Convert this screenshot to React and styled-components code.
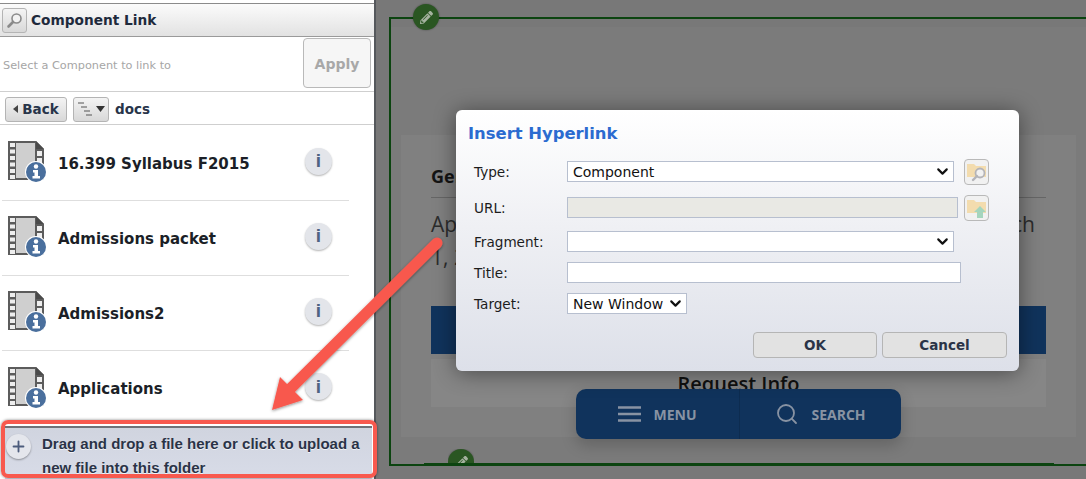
import React from "react";
import styled, { createGlobalStyle } from "styled-components";
import { FaPencilAlt } from "react-icons/fa";
import { Plus, Search, ChevronDown } from "lucide-react";

const verdana = `"DejaVu Sans", Verdana, sans-serif`;
const arial = `"Liberation Sans", Arial, sans-serif`;
const openSans = `"Open Sans", "Noto Sans", sans-serif`;

const files = ["16.399 Syllabus F2015", "Admissions packet", "Admissions2", "Applications"];

// -------------------- PAGE --------------------
const Global = createGlobalStyle`
  html, body { margin: 0; padding: 0; height: 100%; }
  body { overflow: hidden; background: #787878; }
  * { box-sizing: border-box; }
`;

const Page = styled.div`
  position: relative;
  display: flex;
  width: 1086px;
  height: 479px;
  overflow: hidden;
  background: #787878;
`;

// -------------------- SIDEBAR --------------------
const Sidebar = styled.aside`
  display: flex;
  flex-direction: column;
  flex: 0 0 376px;
  height: 479px;
  padding-top: 3px;
  background: #fff;
  border-right: 2px solid #55585c;
  overflow: hidden;
  font-family: ${verdana};
`;

const Header = styled.header`
  display: flex;
  align-items: center;
  gap: 4px;
  flex: 0 0 34px;
  padding-left: 2px;
  background: linear-gradient(#fbfbfb, #e2e2e2);
  border-top: 1px solid #8b8b8b;
  border-bottom: 1px solid #9a9a9a;
`;

const HeaderTitle = styled.h1`
  margin: 0;
  font-size: 13.7px;
  font-weight: 700;
  color: #1e2a3c;
`;

const IconButton = styled.button`
  display: flex;
  align-items: center;
  justify-content: center;
  width: ${(p) => p.$width || 25}px;
  height: 25px;
  padding: 0;
  gap: 3px;
  border: 1px solid #b4b4b4;
  border-radius: 3px;
  background: linear-gradient(#f4f4f4, #d8d8d8);
  font-family: ${verdana};
  font-size: 13.5px;
  font-weight: 700;
  color: #28354a;
`;

const ApplyRow = styled.div`
  display: flex;
  align-items: center;
  justify-content: space-between;
  flex: 0 0 55px;
  padding: 0 3px 3px 3px;
  border-bottom: 1px solid #cfcfcf;
`;

const Hint = styled.span`
  margin-top: 5px;
  font-size: 11.3px;
  color: #a6a6a6;
`;

const ApplyButton = styled.button`
  width: 68px;
  height: 50px;
  padding: 2px 0 0;
  border: 1px solid #b9b9b9;
  border-radius: 4px;
  background: #f6f6f6;
  font-family: ${verdana};
  font-size: 14px;
  font-weight: 700;
  color: #a8a8a8;
`;

const NavRow = styled.div`
  display: flex;
  align-items: center;
  gap: 6px;
  flex: 0 0 33px;
  padding: 2px 0 0 5px;
  border-bottom: 1px solid #cfcfcf;
`;

const FolderName = styled.span`
  font-size: 13.5px;
  font-weight: 700;
  color: #28354a;
`;

const FileList = styled.ul`
  flex: 0 0 300px;
  margin: 0;
  padding: 1px 0 0;
  list-style: none;
`;

const FileRow = styled.li`
  display: flex;
  align-items: center;
  width: 347px;
  height: 75px;
  margin-left: 2px;
  padding: 0 0 1px 6px;
  border-bottom: 1px solid #dedede;
  &:last-child { border-bottom: none; }
`;

const FileName = styled.span`
  flex: 1;
  margin-left: 12px;
  padding-top: 2px;
  font-size: 15px;
  font-weight: 700;
  color: #1b1f27;
`;

const FilmSvg = styled.svg`
  flex: 0 0 38px;
  margin-bottom: 2px;
`;

const InfoButton = styled.span`
  display: flex;
  align-items: center;
  justify-content: center;
  width: 27px;
  height: 27px;
  margin: 0 17px 3px 0;
  border-radius: 50%;
  background: #e3e5ea;
  box-shadow: 0 1px 2px rgba(0, 0, 0, 0.3);
  font-family: ${arial};
  font-size: 19px;
  font-weight: 700;
  color: #4f6282;
`;

const UploadBar = styled.div`
  position: relative;
  flex: 0 0 54px;
  margin: 0 2px 0 5px;
  padding: 4px 8px 0 37px;
  background: linear-gradient(#d0d4df, #d8dce8);
  border-top: 2px solid #6f7278;
  font-family: ${arial};
  font-size: 15px;
  font-weight: 700;
  line-height: 24px;
  color: #2a3347;
  text-shadow: 0 1px 0 rgba(255, 255, 255, 0.7);
`;

const PlusCircle = styled.span`
  position: absolute;
  left: 1px;
  top: 6px;
  display: flex;
  align-items: center;
  justify-content: center;
  width: 25px;
  height: 25px;
  border-radius: 50%;
  background: #e4e6ec;
  box-shadow: 0 1px 2px rgba(0, 0, 0, 0.35);
  color: #4c5c7c;
`;

// -------------------- BACKGROUND PAGE --------------------
const Stage = styled.main`
  flex: 1;
  padding: 17px 0 0 13px;
  font-family: ${openSans};
`;

const Frame = styled.section`
  position: relative;
  height: 449px;
  border: 2px solid #0c4410;
  border-right: none;
`;

const FrameBody = styled.div`
  height: calc(100% - 8px);
  margin-top: 8px;
  padding: 108px 10px 0 10px;
  background: #7b7b7b;
`;

const Panel = styled.div`
  height: 302px;
  padding: 29px 30px 0 30px;
  background: #808080;
`;

const Heading = styled.h2`
  margin: 0;
  height: 34px;
  border-bottom: 1px solid #666;
  font-size: 18px;
  font-weight: 700;
  color: #141414;
`;

const Paragraph = styled.div`
  display: flex;
  justify-content: space-between;
  padding-right: 11px;
  margin-top: ${(p) => p.$top || 0}px;
  font-size: 21px;
  line-height: 33px;
  color: #2c2c2c;
`;

const Band = styled.div`
  display: flex;
  align-items: center;
  justify-content: center;
  height: 48px;
  margin-top: ${(p) => p.$top}px;
  background: ${(p) => p.$color};
`;

const RequestInfo = styled.span`
  font-size: 20px;
  font-weight: 600;
  color: #111;
`;

const BottomRule = styled.div`
  height: 2px;
  margin: 26px 22px 0 23px;
  background: #0c4410;
`;

const Badge = styled.span`
  position: absolute;
  left: ${(p) => p.$left}px;
  top: ${(p) => p.$top}px;
  display: flex;
  align-items: center;
  justify-content: center;
  width: 26px;
  height: 26px;
  border-radius: 50%;
  background: #2a5622;
  box-shadow: 0 0 2px rgba(0, 0, 0, 0.4);
  color: #a6b3a0;
  font-size: 13px;
`;

const BottomClip = styled.span`
  position: absolute;
  left: 57px;
  top: 430px;
  width: 26px;
  height: 14px;
  overflow: hidden;
`;

const FloatingNav = styled.nav`
  position: absolute;
  left: 576px;
  top: 389px;
  display: flex;
  width: 325px;
  height: 50px;
  border-radius: 10px;
  background: #10335c;
  box-shadow: 0 6px 16px rgba(0, 0, 0, 0.2);
  color: #8893a3;
  font-family: ${openSans};
  font-size: 14px;
  font-weight: 700;
`;

const NavItem = styled.div`
  display: flex;
  align-items: center;
  justify-content: center;
  gap: ${(p) => p.$gap}px;
  flex: 0 0 ${(p) => p.$width}px;
  border-right: ${(p) => (p.$divided ? "1px solid #0d2c50" : "none")};
`;

// -------------------- DIALOG --------------------
const Dialog = styled.div`
  position: absolute;
  left: 456px;
  top: 110px;
  width: 563px;
  height: 261px;
  padding: 0 12px;
  border-radius: 6px;
  background: linear-gradient(#fff, #eff0f4 45%, #dde0e9);
  box-shadow: 0 2px 22px rgba(0, 0, 0, 0.45);
  font-family: ${verdana};
`;

const DialogTitle = styled.h3`
  display: flex;
  align-items: center;
  height: 51px;
  margin: 0;
  padding-bottom: 5px;
  font-size: 16.4px;
  font-weight: 700;
  color: #2b6bd0;
`;

const FormRow = styled.div`
  display: flex;
  align-items: flex-start;
  height: ${(p) => p.$height}px;
  padding-left: 6px;
`;

const FieldLabel = styled.label`
  flex: 0 0 93px;
  height: 21px;
  font-size: 13.6px;
  line-height: 23px;
  color: #1c1c1c;
`;

const SelectBox = styled.div`
  position: relative;
  display: flex;
  width: ${(p) => p.$width}px;
  height: 21px;
`;

const Select = styled.select`
  appearance: none;
  width: 100%;
  height: 21px;
  padding: 0 0 0 5px;
  border: 1px solid #b7bfcf;
  border-radius: 0;
  background: #fff;
  font-family: ${verdana};
  font-size: 14px;
  color: #111;
`;

const Chevron = styled.span`
  position: absolute;
  right: 3px;
  top: 2px;
  display: flex;
  pointer-events: none;
  color: #111;
`;

const TextInput = styled.input`
  width: ${(p) => p.$width}px;
  height: 21px;
  padding: 0 5px;
  border: 1px solid #b7bfcf;
  background: ${(p) => (p.disabled ? "#e9e9e4" : "#fff")};
`;

const FolderButton = styled.button`
  flex: 0 0 25px;
  height: 26px;
  margin: -2px 0 0 ${(p) => p.$gap}px;
  padding: 0;
  display: flex;
  align-items: center;
  justify-content: center;
  border: 1px solid #b9b9b9;
  border-radius: 4px;
  background: #f1f1f1;
`;

const Actions = styled.div`
  display: flex;
  justify-content: flex-end;
  gap: 5px;
  margin-top: 0;
`;

const DialogButton = styled.button`
  width: ${(p) => p.$width}px;
  height: 26px;
  padding: 0;
  border: 1px solid #b5b5b5;
  border-radius: 4px;
  background: #e2e2e2;
  font-family: ${verdana};
  font-size: 13.5px;
  font-weight: 700;
  color: #2a3347;
`;

// -------------------- ANNOTATION --------------------
const RedBox = styled.div`
  position: absolute;
  left: 1px;
  top: 420px;
  width: 376px;
  height: 58px;
  border: 4px solid #f8594e;
  border-radius: 7px;
  box-shadow: 0 0 3px rgba(0, 0, 0, 0.5);
  pointer-events: none;
`;

const ArrowLayer = styled.svg`
  position: absolute;
  left: 0;
  top: 0;
  pointer-events: none;
`;

// -------------------- ICONS --------------------
function FilmIcon() {
  const holes = [2, 8.5, 15, 21.5, 28, 34];
  return (
    <FilmSvg width="38" height="41" viewBox="0 0 38 41">
      <path d="M0 0H28L36 8V39H0Z" fill="#5c5c5c" />
      <rect x="8" y="2" width="19" height="35" fill="#cfcfcf" />
      <path d="M28 0L36 8H28Z" fill="#4a4a4a" />
      {holes.map((y) => (
        <rect key={y} x="2" y={y} width="5" height="4" fill="#eee" />
      ))}
      {[10, 17].map((y) => (
        <rect key={y} x="29" y={y} width="5" height="5" fill="#eee" />
      ))}
      <circle cx="28" cy="31" r="11" fill="#fff" />
      <circle cx="28" cy="31" r="10" fill="#4a6f9d" />
      <circle cx="28" cy="25.5" r="2.2" fill="#fff" />
      <path d="M25 29H30V35H32V37.5H24.5V35H26.5V31.5H25Z" fill="#fff" />
    </FilmSvg>
  );
}

function LensIcon() {
  return (
    <svg width="17" height="17" viewBox="0 0 17 17">
      <circle cx="10.5" cy="6.5" r="4.5" fill="#f2f2f2" stroke="#8a8a8a" strokeWidth="1.6" />
      <path d="M7 10L2.5 14.5" stroke="#8a8a8a" strokeWidth="2.6" strokeLinecap="round" />
    </svg>
  );
}

function TreeIcon() {
  return (
    <svg width="30" height="16" viewBox="0 0 30 16">
      <path d="M2 2H8M5 6H11M8 10H14M10 14H16" stroke="#555" strokeWidth="1" />
      <path d="M20 5H29L24.500 11Z" fill="#333" />
    </svg>
  );
}

function FolderGlyph({ children }) {
  return (
    <svg width="23" height="23" viewBox="0 0 23 23">
      <path d="M2 3H9L11 5H21V16H2Z" fill="#f3dcae" />
      {children}
    </svg>
  );
}

function MenuIcon() {
  return (
    <svg width="23" height="16" viewBox="0 0 23 16">
      <path d="M0 1.500H23M0 8H23M0 14.500H23" stroke="#8893a3" strokeWidth="2.4" />
    </svg>
  );
}

function Arrow() {
  return (
    <ArrowLayer width="1086" height="479" viewBox="0 0 1086 479">
      <defs>
        <filter id="arrowShadow" x="-10%" y="-10%" width="120%" height="120%">
          <feDropShadow dx="0" dy="1" stdDeviation="1.5" floodColor="#000" floodOpacity="0.45" />
        </filter>
      </defs>
      <g filter="url(#arrowShadow)" fill="#f8594e" stroke="none">
        <path d="M437 243L288 391" stroke="#f8594e" strokeWidth="11" strokeLinecap="round" />
        <path d="M272 410L280 377L292 389L303 400Z" />
      </g>
    </ArrowLayer>
  );
}

// -------------------- COMPONENT --------------------
export default function App() {
  return (
    <Page>
      <Global />
      <Sidebar>
        <Header>
          <IconButton><LensIcon /></IconButton>
          <HeaderTitle>Component Link</HeaderTitle>
        </Header>
        <ApplyRow>
          <Hint>Select a Component to link to</Hint>
          <ApplyButton>Apply</ApplyButton>
        </ApplyRow>
        <NavRow>
          <IconButton $width={62}>
            <svg width="6" height="8" viewBox="0 0 6 8"><path d="M5 0V8L0 4Z" fill="#444" /></svg>
            Back
          </IconButton>
          <IconButton $width={36}><TreeIcon /></IconButton>
          <FolderName>docs</FolderName>
        </NavRow>
        <FileList>
          {files.map((name) => (
            <FileRow key={name}>
              <FilmIcon />
              <FileName>{name}</FileName>
              <InfoButton>i</InfoButton>
            </FileRow>
          ))}
        </FileList>
        <UploadBar>
          <PlusCircle><Plus size={17} strokeWidth={2.6} /></PlusCircle>
          Drag and drop a file here or click to upload a new file into this folder
        </UploadBar>
      </Sidebar>

      <Stage>
        <Frame>
          <FrameBody>
            <Panel>
              <Heading>General Information</Heading>
              <Paragraph $top={10}>
                <span>Applications</span>
                <span>March</span>
              </Paragraph>
              <Paragraph>1, 2016</Paragraph>
              <Band $top={32} $color="#10335c" />
              <Band $top={5} $color="#868686">
                <RequestInfo>Request Info</RequestInfo>
              </Band>
            </Panel>
            <BottomRule />
          </FrameBody>
          <Badge $left={22} $top={-15}><FaPencilAlt /></Badge>
          <BottomClip><Badge $left={0} $top={0}><FaPencilAlt /></Badge></BottomClip>
        </Frame>
      </Stage>

      <FloatingNav>
        <NavItem $width={164} $gap={12} $divided>
          <MenuIcon />
          MENU
        </NavItem>
        <NavItem $width={161} $gap={12}>
          <Search size={24} strokeWidth={1.8} />
          SEARCH
        </NavItem>
      </FloatingNav>

      <Dialog>
        <DialogTitle>Insert Hyperlink</DialogTitle>
        <FormRow $height={36}>
          <FieldLabel>Type:</FieldLabel>
          <SelectBox $width={387}>
            <Select defaultValue="Component"><option>Component</option></Select>
            <Chevron><ChevronDown size={17} strokeWidth={3} /></Chevron>
          </SelectBox>
          <FolderButton $gap={10}>
            <FolderGlyph>
              <circle cx="15" cy="12" r="4.500" fill="#f1f1f1" stroke="#b4b4b8" strokeWidth="1.8" />
              <path d="M12 15L8 19" stroke="#b4b4b8" strokeWidth="2.4" strokeLinecap="round" />
            </FolderGlyph>
          </FolderButton>
        </FormRow>
        <FormRow $height={34}>
          <FieldLabel>URL:</FieldLabel>
          <TextInput $width={391} disabled />
          <FolderButton $gap={6}>
            <FolderGlyph>
              <path d="M15 9L21 15H18V21H12V15H9Z" fill="#a5d5bd" />
            </FolderGlyph>
          </FolderButton>
        </FormRow>
        <FormRow $height={31}>
          <FieldLabel>Fragment:</FieldLabel>
          <SelectBox $width={387}>
            <Select><option></option></Select>
            <Chevron><ChevronDown size={17} strokeWidth={3} /></Chevron>
          </SelectBox>
        </FormRow>
        <FormRow $height={31}>
          <FieldLabel>Title:</FieldLabel>
          <TextInput $width={394} />
        </FormRow>
        <FormRow $height={39}>
          <FieldLabel>Target:</FieldLabel>
          <SelectBox $width={120}>
            <Select defaultValue="New Window"><option>New Window</option></Select>
            <Chevron><ChevronDown size={17} strokeWidth={3} /></Chevron>
          </SelectBox>
        </FormRow>
        <Actions>
          <DialogButton $width={124}>OK</DialogButton>
          <DialogButton $width={125}>Cancel</DialogButton>
        </Actions>
      </Dialog>

      <RedBox />
      <Arrow />
    </Page>
  );
}
